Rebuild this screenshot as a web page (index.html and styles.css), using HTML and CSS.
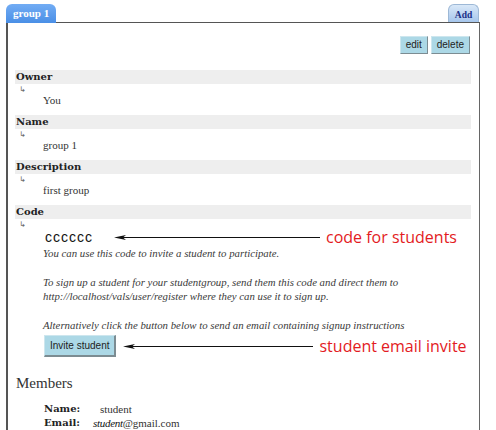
FILE: index.html
```html
<!DOCTYPE html>
<html>
<head>
<meta charset="utf-8">
<link rel="stylesheet" href="styles.css">
</head>
<body>
<div class="page">
  <div class="tabs">
    <div class="tab tab-active">group 1</div>
    <div class="tab tab-add">Add</div>
  </div>
  <div class="panel">
    <div class="actions">
      <button class="btn">edit</button>
      <button class="btn">delete</button>
    </div>

    <div class="field">
      <div class="label">Owner</div>
      <div class="sub">&#8627;</div>
      <div class="value">You</div>
    </div>
    <div class="field">
      <div class="label">Name</div>
      <div class="sub">&#8627;</div>
      <div class="value">group 1</div>
    </div>
    <div class="field">
      <div class="label">Description</div>
      <div class="sub">&#8627;</div>
      <div class="value">first group</div>
    </div>
    <div class="field">
      <div class="label">Code</div>
      <div class="sub">&#8627;</div>
      <div class="value">
        <div class="code-row">
          <span class="code-text">cccccc</span>
          <svg class="arrow arrow-code" width="206" height="7" viewBox="0 0 206 7"><path d="M0 3.5 L12 1 L9 3.5 L12 6 Z" fill="#111"/><line x1="9" y1="3.5" x2="206" y2="3.5" stroke="#111" stroke-width="1.2"/></svg>
          <span class="note">code for students</span>
        </div>
        <p class="info">You can use this code to invite a student to participate.</p>
        <p class="info">To sign up a student for your studentgroup, send them this code and direct them to<br>http://localhost/vals/user/register where they can use it to sign up.</p>
        <p class="info info-last">Alternatively click the button below to send an email containing signup instructions</p>
        <div class="invite-row">
          <button class="btn btn-invite">Invite student</button>
          <svg class="arrow arrow-invite" width="190" height="7" viewBox="0 0 190 7"><path d="M0 3.5 L12 1 L9 3.5 L12 6 Z" fill="#111"/><line x1="9" y1="3.5" x2="190" y2="3.5" stroke="#111" stroke-width="1.2"/></svg>
          <span class="note">student email invite</span>
        </div>
      </div>
    </div>

    <h2 class="members-title">Members</h2>
    <div class="members">
      <div class="mrow"><span class="mlabel">Name:</span><span class="mvalue">student</span></div>
      <div class="mrow"><span class="mlabel">Email:</span><span class="mvalue mvalue-edited"><i class="hand">student</i>@gmail.com</span></div>
    </div>
  </div>
</div>
</body>
</html>
```
FILE: styles.css
```css
html, body {
  margin: 0;
  padding: 0;
  background: #fff;
}
.page {
  width: 474px;
  padding: 4px 0 0 6px;
  font-family: "Liberation Serif", serif;
  color: #333;
}
.tabs {
  display: flex;
  justify-content: space-between;
  align-items: flex-end;
  height: 18px;
  position: relative;
  z-index: 2;
}
.tab {
  box-sizing: border-box;
  font-family: "Liberation Serif", serif;
  font-weight: bold;
  border-radius: 6px 6px 0 0;
}
.tab-active {
  width: 50px;
  height: 19px;
  margin-bottom: -1px;
  padding: 3px 0 0 7px;
  font-size: 11px;
  line-height: 13px;
  color: #fff;
  background: linear-gradient(#72acf4, #4a8fe6);
}
.tab-add {
  width: 31px;
  height: 18px;
  margin-right: 1px;
  padding-top: 4px;
  text-align: center;
  font-size: 9.5px;
  line-height: 12px;
  color: #1b2f86;
  background: linear-gradient(#d9e8f8, #a6c6ec);
  border: 1px solid #9db8d6;
  border-bottom: none;
}
.panel {
  border-top: 1px solid #555;
  border-left: 2px solid #555;
  border-right: 1px solid #666;
  padding: 13px 8px 0 7px;
  min-height: 400px;
}
.actions {
  display: flex;
  justify-content: flex-end;
  gap: 3px;
  margin-right: 1px;
  margin-bottom: 16px;
}
.btn {
  font-family: "Liberation Sans", sans-serif;
  font-size: 10px;
  color: #222;
  background: #acd8e6;
  border: 1px solid;
  border-color: #cde6ee #7c8c92 #7c8c92 #cde6ee;
  height: 18px;
  padding: 0 5px;
  margin: 0;
  line-height: 16px;
}
.field {
  margin-bottom: 8px;
}
.label {
  background: #eee;
  font-family: "DejaVu Serif", serif;
  font-weight: bold;
  font-size: 10px;
  line-height: 14px;
  color: #222;
  padding-left: 1px;
}
.sub {
  height: 9px;
  font-family: "DejaVu Sans", sans-serif;
  font-size: 8px;
  line-height: 12px;
  padding-left: 4px;
  color: #666;
}
.value {
  padding-left: 28px;
  font-size: 11px;
  line-height: 14px;
  color: #333;
}
.code-row {
  display: flex;
  align-items: center;
  height: 18px;
}
.code-text {
  font-family: "Liberation Sans", sans-serif;
  font-size: 14px;
  letter-spacing: 1px;
  color: #111;
  margin-left: 2px;
  width: 69px;
}
.arrow {
  display: block;
  flex: none;
}
.note {
  font-family: "Open Sans", sans-serif;
  font-size: 16px;
  line-height: 18px;
  color: #e31b23;
  margin-left: 6px;
  white-space: nowrap;
}
.info {
  margin: 0 0 15px;
  font-size: 10.8px;
  font-style: italic;
  color: #3a3a3a;
}
.info-last {
  margin-bottom: 3px;
}
.invite-row {
  display: flex;
  align-items: center;
}
.btn-invite {
  height: 22px;
  padding: 0 5px;
  margin-left: 1px;
  margin-right: 7px;
  border-color: #cde6ee #7c8c92 #7c8c92 #cde6ee;
  border-width: 1px 2px 2px 1px;
}
.members-title {
  margin: 17px 0 10px 1px;
  font-family: "Liberation Serif", serif;
  font-weight: normal;
  font-size: 15px;
  line-height: 18px;
  color: #333;
}
.members {
  padding-left: 29px;
  font-size: 11px;
  line-height: 14px;
}
.mrow {
  display: flex;
}
.mlabel {
  width: 56px;
  font-family: "DejaVu Serif", serif;
  font-weight: bold;
  font-size: 10px;
  color: #222;
}
.mvalue-edited {
  margin-left: -7px;
}
.hand {
  font-family: "Liberation Serif", serif;
  color: #111;
  letter-spacing: -0.3px;
}
```
